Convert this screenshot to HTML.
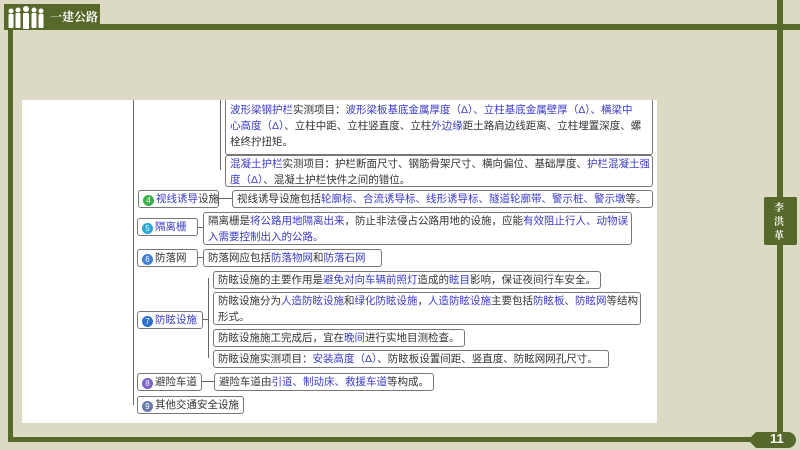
<!DOCTYPE html>
<html><head><meta charset="utf-8"><style>
body{margin:0;width:800px;height:450px;background:#dcd9c4;position:relative;overflow:hidden;font-family:"Liberation Sans","Noto Sans CJK SC",sans-serif;}
.ab{position:absolute;}
.g{background:#56682a;}
.w{background:#fff;}
.bx{position:absolute;border:1px solid #777;border-radius:3px;background:#fff;font-size:10.5px;line-height:16px;color:#333;padding:0 4px;box-sizing:border-box;white-space:nowrap;}
.b{color:#3a3ac8;}
.n{display:inline-block;width:11px;height:11px;border-radius:50%;color:#fff;font-size:8px;line-height:11px;text-align:center;vertical-align:-1px;margin-right:2px;}
.l{position:absolute;background:#666;}
</style></head><body>
<div class="ab g" style="left:8px;top:30px;width:5px;height:412px"></div>
<div class="ab g" style="left:8px;top:437px;width:775px;height:5px"></div>
<div class="ab g" style="left:777px;top:0;width:6px;height:442px"></div>
<div class="ab g" style="left:98px;top:24px;width:702px;height:6px"></div>
<div class="ab g" style="left:4px;top:4px;width:96px;height:26px"></div>
<svg class="ab" style="left:6px;top:6px" width="40" height="24" viewBox="0 0 40 24" fill="#fff">
<circle cx="5" cy="5" r="2.5"/><rect x="2.5" y="8" width="5" height="14" rx="1"/>
<circle cx="12" cy="4" r="2.5"/><rect x="9.5" y="7" width="5" height="15" rx="1"/>
<circle cx="20" cy="3" r="3"/><rect x="17" y="7" width="6" height="16" rx="1"/>
<circle cx="28" cy="4" r="2.5"/><rect x="25.5" y="7" width="5" height="15" rx="1"/>
<circle cx="35" cy="5" r="2.5"/><rect x="32.5" y="8" width="5" height="14" rx="1"/></svg>
<div class="ab" style="left:50px;top:8px;color:#fff;font-size:12px;font-weight:bold;font-family:'Noto Serif CJK SC',serif">一建公路</div>
<div class="ab g" style="left:764px;top:197px;width:33px;height:48px;border-radius:2px"></div>
<div class="ab" style="left:774px;top:200px;color:#fff;font-size:10px;line-height:14px;width:14px;font-weight:bold;font-family:'Noto Serif CJK SC',serif">李洪革</div>
<div class="ab g" style="left:748px;top:432px;width:48px;height:16px;border-radius:0 8px 8px 0;clip-path:polygon(8px 0,100% 0,100% 100%,8px 100%,0 50%)"></div>
<div class="ab" style="left:770px;top:431px;color:#fff;font-size:13px;font-weight:bold">11</div>
<div class="ab w" style="left:22px;top:100px;width:635px;height:323px"></div>

<div class="l" style="left:133px;top:100px;width:1px;height:305px"></div>
<div class="l" style="left:220px;top:100px;width:1px;height:70px"></div>
<div class="l" style="left:208px;top:278px;width:1px;height:80px"></div>

<div class="bx" style="left:225px;top:100px;width:428px;height:55px;border-top:none;border-radius:0 0 3px 3px;padding-top:2px"><span class="b">波形梁钢护栏</span>实测项目：<span class="b">波形梁板基底金属厚度（Δ）、立柱基底金属壁厚（Δ）、横梁中</span><br><span class="b">心高度（Δ）</span>、立柱中距、立柱竖直度、立柱<span class="b">外边缘</span>距土路肩边线距离、立柱埋置深度、螺<br>栓终拧扭矩。</div>
<div class="bx" style="left:225px;top:155px;width:428px;height:32px;padding-top:0"><span class="b">混凝土护栏</span>实测项目：护栏断面尺寸、钢筋骨架尺寸、横向偏位、基础厚度、<span class="b">护栏混凝土强</span><br><span class="b">度（Δ）</span>、混凝土护栏快件之间的错位。</div>

<div class="l" style="left:218px;top:198px;width:14px;height:1px"></div>
<div class="bx" style="left:138px;top:190px;width:81px;height:18px"><span class="n" style="background:#3cb04a">4</span><span class="b">视线诱导</span>设施</div>
<div class="bx" style="left:232px;top:190px;width:421px;height:18px">视线诱导设施包括<span class="b">轮廓标、合流诱导标、线形诱导标、隧道轮廓带、警示桩、警示墩</span>等。</div>

<div class="l" style="left:197px;top:227px;width:6px;height:1px"></div>
<div class="bx" style="left:137px;top:218px;width:61px;height:18px"><span class="n" style="background:#2aa6d8">5</span><span class="b">隔离栅</span></div>
<div class="bx" style="left:203px;top:212px;width:429px;height:33px">隔离栅是<span class="b">将公路用地隔离出来</span>，防止非法侵占公路用地的设施，应能<span class="b">有效阻止行人、动物误</span><br><span class="b">入需要控制出入的公路。</span></div>

<div class="l" style="left:197px;top:257px;width:6px;height:1px"></div>
<div class="bx" style="left:137px;top:249px;width:61px;height:18px"><span class="n" style="background:#3f7fd8">6</span>防落网</div>
<div class="bx" style="left:203px;top:249px;width:179px;height:18px">防落网应包括<span class="b">防落物网</span>和<span class="b">防落石网</span></div>

<div class="l" style="left:202px;top:319px;width:6px;height:1px"></div>
<div class="bx" style="left:137px;top:311px;width:66px;height:18px"><span class="n" style="background:#2c6fd0">7</span><span class="b">防眩设施</span></div>
<div class="bx" style="left:213px;top:271px;width:388px;height:18px">防眩设施的主要作用是<span class="b">避免对向车辆前照灯</span>造成的<span class="b">眩目</span>影响，保证夜间行车安全。</div>
<div class="bx" style="left:213px;top:292px;width:428px;height:33px">防眩设施分为<span class="b">人造防眩设施</span>和<span class="b">绿化防眩设施</span>，<span class="b">人造防眩设施</span>主要包括<span class="b">防眩板</span>、<span class="b">防眩网</span>等结构<br>形式。</div>
<div class="bx" style="left:213px;top:329px;width:252px;height:18px">防眩设施施工完成后，宜在<span class="b">晚间</span>进行实地目测检查。</div>
<div class="bx" style="left:213px;top:350px;width:396px;height:18px">防眩设施实测项目：<span class="b">安装高度（Δ）</span>、防眩板设置间距、竖直度、防眩网网孔尺寸。</div>

<div class="l" style="left:201px;top:381px;width:13px;height:1px"></div>
<div class="bx" style="left:137px;top:373px;width:65px;height:18px"><span class="n" style="background:#7a62c8">8</span>避险车道</div>
<div class="bx" style="left:214px;top:373px;width:220px;height:18px">避险车道由<span class="b">引道、制动床、救援车道</span>等构成。</div>
<div class="bx" style="left:137px;top:396px;width:107px;height:18px"><span class="n" style="background:#6a7aa8">9</span>其他交通安全设施</div>
</body></html>
